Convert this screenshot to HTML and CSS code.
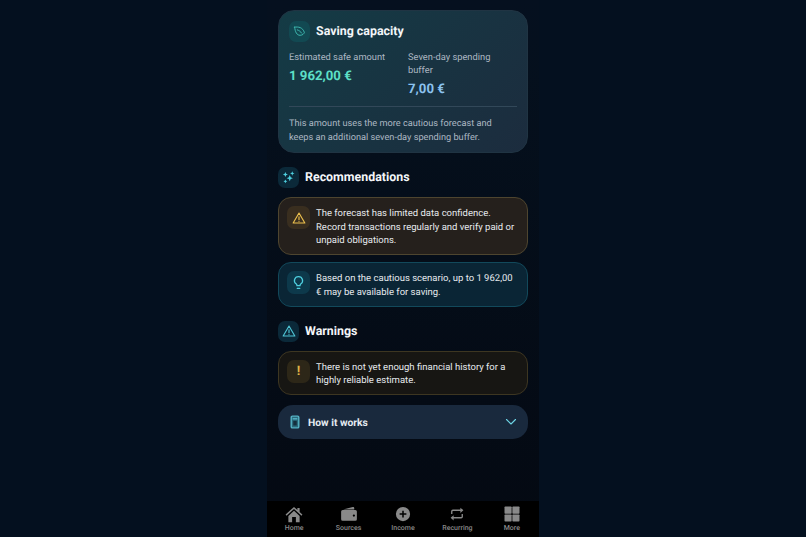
FILE: index.html
```html
<!DOCTYPE html>
<html lang="en">
<head>
  <meta charset="UTF-8">
  <title>Saving capacity</title>
  <link rel="stylesheet" href="styles.css">
</head>
<body>
  <div class="phone">
    <main class="content">
      <section class="capacity-card">
        <div class="capacity-head">
          <div class="icon-box icon-teal">
            <svg viewBox="0 0 24 24" width="13" height="13" fill="none" stroke="#3fb8b0" stroke-width="1.8" stroke-linecap="round" stroke-linejoin="round"><path d="M3 4c7-1 15 0 18 10-1 2-3 5-8 5-6 0-9-6-10-15z"/><path d="M8 9c3 1 6 3 8 6"/></svg>
          </div>
          <h2 class="capacity-title">Saving capacity</h2>
        </div>
        <div class="capacity-cols">
          <div class="capacity-col">
            <div class="capacity-label">Estimated safe amount</div>
            <div class="capacity-value value-green">1 962,00 €</div>
          </div>
          <div class="capacity-col">
            <div class="capacity-label">Seven-day spending buffer</div>
            <div class="capacity-value value-blue">7,00 €</div>
          </div>
        </div>
        <p class="capacity-note">This amount uses the more cautious forecast and keeps an additional seven-day spending buffer.</p>
      </section>

      <div class="section-head section-first">
        <div class="icon-box icon-navy">
          <svg viewBox="0 0 24 24" width="15" height="15" fill="#4fd0e0"><path d="M7 3l1.200 2.800L11 7 8.200 8.200 7 11 5.800 8.200 3 7l2.800-1.200z"/><path d="M18 2l1 2.500 2.500 1-2.500 1-1 2.500-1-2.500-2.500-1 2.500-1z"/><path d="M14 8l1.500 3.500L19 13l-3.500 1.500L14 18l-1.500-3.500L9 13l3.500-1.500z"/><path d="M7 15l1 2 2 1-2 1-1 2-1-2-2-1 2-1z"/></svg>
        </div>
        <h2 class="section-title">Recommendations</h2>
      </div>

      <div class="note note-amber">
        <div class="note-icon note-icon-amber">
          <svg viewBox="0 0 24 24" width="14" height="14" fill="none" stroke="#ecc04e" stroke-width="2" stroke-linecap="round" stroke-linejoin="round"><path d="M12 3.500L22 20.500H2z"/><path d="M12 10v5"/><path d="M12 18v.1"/></svg>
        </div>
        <p class="note-text">The forecast has limited data confidence. Record transactions regularly and verify paid or unpaid obligations.</p>
      </div>

      <div class="note note-blue">
        <div class="note-icon note-icon-blue">
          <svg viewBox="0 0 24 24" width="15" height="15" fill="none" stroke="#4fd0e0" stroke-width="2" stroke-linecap="round" stroke-linejoin="round"><path d="M12 2.500a6.500 6.500 0 0 0-3.500 12c.6.500 1 1.300 1 2.500h5c0-1.200.4-2 1-2.500a6.500 6.500 0 0 0-3.500-12z"/><path d="M10 21.500h4"/></svg>
        </div>
        <p class="note-text">Based on the cautious scenario, up to 1 962,00 € may be available for saving.</p>
      </div>

      <div class="section-head section-warn">
        <div class="icon-box icon-navy">
          <svg viewBox="0 0 24 24" width="14" height="14" fill="none" stroke="#4fc4d4" stroke-width="2" stroke-linecap="round" stroke-linejoin="round"><path d="M12 3.500L22 20.500H2z"/><path d="M12 10v5"/><path d="M12 18v.1"/></svg>
        </div>
        <h2 class="section-title">Warnings</h2>
      </div>

      <div class="note note-dim">
        <div class="note-icon note-icon-dim"><span class="bang">!</span></div>
        <p class="note-text">There is not yet enough financial history for a highly reliable estimate.</p>
      </div>

      <div class="how-row">
        <svg viewBox="0 0 24 24" width="14" height="14" fill="none" stroke="#56b4c6" stroke-width="2.400"><rect x="5.500" y="2" width="13" height="20" rx="2" fill="#2c6a7c"/><rect x="9" y="10" width="6" height="8" fill="#16303f" stroke="none"/><path d="M8 6.500h8"/></svg>
        <span class="how-label">How it works</span>
        <svg class="how-chevron" viewBox="0 0 24 24" width="12" height="12" fill="none" stroke="#6fd6e6" stroke-width="2.200" stroke-linecap="round" stroke-linejoin="round"><path d="M3 7l9 9 9-9"/></svg>
      </div>
    </main>

    <nav class="bottom-nav">
      <div class="nav-item">
        <svg viewBox="0 0 24 24" width="18" height="18" fill="#8a8a8a"><path d="M12 2.500L.8 12.800l1.200 1.400L12 5.200l10 9 1.200-1.400-3.700-3.400V4h-3v2.700z"/><path d="M4.500 14.500L12 7.700l7.500 6.800V23h-5v-7h-5v7h-5z"/></svg>
        <span>Home</span>
      </div>
      <div class="nav-item">
        <svg viewBox="0 0 24 24" width="18" height="18" fill="#8a8a8a"><path d="M4 6L17 2.800c1-.3 2 .4 2 1.500V6z"/><path d="M3.500 6.500h17a2 2 0 0 1 2 2V19a2 2 0 0 1-2 2h-17a2 2 0 0 1-2-2V8.500a2 2 0 0 1 2-2zm15 6a1.500 1.500 0 1 0 0 3 1.500 1.500 0 0 0 0-3z" fill-rule="evenodd"/></svg>
        <span>Sources</span>
      </div>
      <div class="nav-item">
        <svg viewBox="0 0 24 24" width="18" height="18" fill="#8a8a8a"><path fill-rule="evenodd" d="M12 2.500a9.500 9.500 0 1 0 0 19 9.500 9.500 0 0 0 0-19zm-1 5h2V11h3.500v2H13v3.500h-2V13H7.500v-2H11z"/></svg>
        <span>Income</span>
      </div>
      <div class="nav-item">
        <svg viewBox="0 0 24 24" width="18" height="18" fill="none" stroke="#8a8a8a" stroke-width="1.800"><path d="M5 12V8.500a1.500 1.500 0 0 1 1.500-1.500H19"/><path d="M19 12v3.500a1.500 1.500 0 0 1-1.500 1.500H5"/><path d="M16.500 3.500L20.500 7l-4 3.500z" fill="#8a8a8a" stroke="none"/><path d="M7.500 13.500L3.500 17l4 3.500z" fill="#8a8a8a" stroke="none"/></svg>
        <span>Recurring</span>
      </div>
      <div class="nav-item">
        <svg viewBox="0 0 24 24" width="18" height="18" fill="#8a8a8a"><rect x="2" y="2" width="9.500" height="9.500" rx="1"/><rect x="12.500" y="2" width="9.500" height="9.500" rx="1"/><rect x="2" y="12.500" width="9.500" height="9.500" rx="1"/><rect x="12.500" y="12.500" width="9.500" height="9.500" rx="1"/></svg>
        <span>More</span>
      </div>
    </nav>
  </div>
</body>
</html>
```

FILE: styles.css
```css
html, body {
  height: 100%;
}

body {
  margin: 0;
  background: #04101f;
  display: flex;
  justify-content: center;
  font-family: 'Roboto', sans-serif;
  text-rendering: geometricPrecision;
  overflow: hidden;
}

.phone {
  width: 272px;
  height: 537px;
  display: flex;
  flex-direction: column;
  background: linear-gradient(to bottom, #06111f, #050912);
  opacity: .995;
}

.content {
  flex: 1;
  padding: 10px 11px 0;
}

.capacity-card {
  height: 143px;
  box-sizing: border-box;
  padding: 10px 10px 0;
  border-radius: 16px;
  border: 1px solid #213544;
  background: linear-gradient(135deg, #153c46, #1d2d3f);
}

.capacity-head {
  display: flex;
  align-items: center;
  gap: 6px;
}

.icon-box {
  width: 21px;
  height: 21px;
  border-radius: 7px;
  display: flex;
  align-items: center;
  justify-content: center;
  flex-shrink: 0;
}

.icon-teal {
  background: #134a53;
}

.icon-navy {
  background: #0c2a3a;
}

.capacity-title,
.section-title {
  margin: 0;
  font-size: 12.400px;
  font-weight: 700;
  color: #f4f7fa;
}

.capacity-cols {
  display: flex;
  gap: 15px;
  margin-top: 9px;
}

.capacity-col {
  width: 104px;
}

.capacity-label {
  font-size: 9.300px;
  line-height: 13px;
  color: #aeb9c4;
}

.capacity-value {
  margin-top: 5px;
  font-size: 13.200px;
  line-height: 16px;
  font-weight: 700;
}

.value-green {
  color: #5ee0c8;
}

.value-blue {
  color: #8dc4f0;
}

.capacity-note {
  margin: 8px 0 0;
  padding-top: 10px;
  border-top: 1px solid #33495a;
  font-size: 9.200px;
  line-height: 13.500px;
  color: #aeb9c4;
}

.section-head {
  display: flex;
  align-items: center;
  gap: 6px;
}

.section-first,
.section-warn {
  margin-top: 14px;
}

.note {
  display: flex;
  gap: 6px;
  box-sizing: border-box;
  margin-top: 7px;
  padding: 8px 8px 6.500px;
  border-radius: 13px;
  border: 1px solid;
}

.section-head + .note {
  margin-top: 9px;
}

.note-amber {
  background: #26211c;
  border-color: #4f4630;
}

.note-blue {
  background: #0b2636;
  border-color: #134a5c;
}

.note-dim {
  background: #181713;
  border-color: #3e3722;
}

.note-icon {
  width: 23px;
  height: 23px;
  border-radius: 7px;
  display: flex;
  align-items: center;
  justify-content: center;
  flex-shrink: 0;
}

.note-icon-amber {
  background: #3a2f20;
}

.note-icon-blue {
  background: #0e3a4c;
}

.note-icon-dim {
  background: #2e2818;
}

.bang {
  font-size: 13px;
  font-weight: 700;
  color: #e0b84a;
}

.note-text {
  margin: 0;
  padding-top: 1px;
  font-size: 9.500px;
  line-height: 13.500px;
  color: #e6eaee;
}

.how-row {
  display: flex;
  align-items: center;
  height: 34px;
  margin-top: 10px;
  padding: 0 11px 0 10px;
  border-radius: 15px;
  background: #1a2a3e;
}

.how-label {
  margin-left: 6px;
  font-size: 10.300px;
  font-weight: 700;
  color: #e6edf3;
}

.how-chevron {
  margin-left: auto;
}

.bottom-nav {
  height: 36px;
  display: flex;
  background: #000;
}

.nav-item {
  flex: 1;
  display: flex;
  flex-direction: column;
  align-items: center;
  color: #8a8a8a;
  font-size: 7px;
  font-weight: 500;
  padding-top: 4px;
  gap: 1px;
}
```
